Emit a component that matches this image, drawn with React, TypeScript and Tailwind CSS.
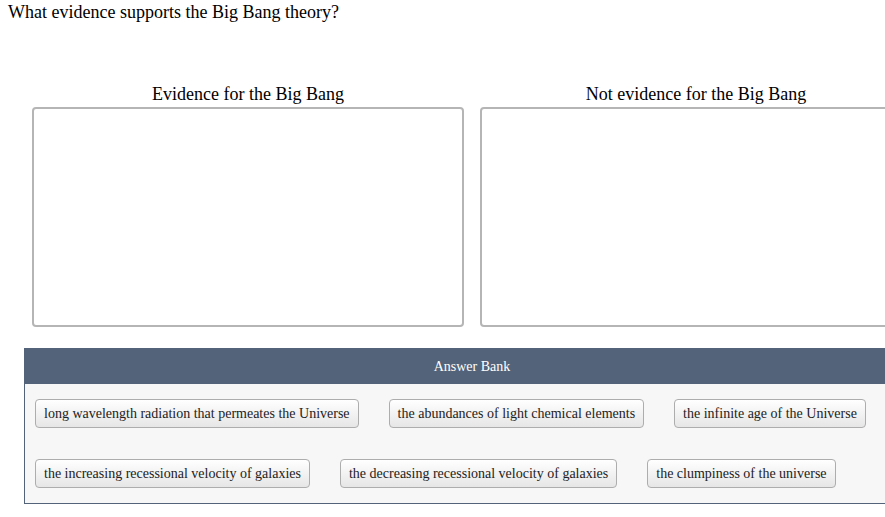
import React from "react";

const row1 = [
  "long wavelength radiation that permeates the Universe",
  "the abundances of light chemical elements",
  "the infinite age of the Universe",
];
const row2 = [
  "the increasing recessional velocity of galaxies",
  "the decreasing recessional velocity of galaxies",
  "the clumpiness of the universe",
];

function Chip({ text }: { text: string }) {
  return (
    <div className="h-[29px] px-[8px] flex items-center border border-[#adadad] rounded-[4px] bg-gradient-to-b from-white to-[#e6e6e6] text-[14px] text-[#222] whitespace-nowrap">
      {text}
    </div>
  );
}

export default function App() {
  return (
    <div
      className="w-[885px] h-[517px] overflow-hidden bg-white text-black"
      style={{ fontFamily: '"Liberation Serif", "Times New Roman", serif' }}
    >
      <div className="pt-[2px] pl-[8px] text-[18px] leading-[21px]">
        What evidence supports the Big Bang theory?
      </div>
      <div className="ml-[24px] w-[896px] mt-[61px]">
        <div className="flex gap-[16px] px-[8px]">
          {["Evidence for the Big Bang", "Not evidence for the Big Bang"].map((h) => (
            <div key={h} className="w-[432px] shrink-0">
              <div className="text-center text-[18px] leading-[21px] mb-[2px]">{h}</div>
              <div className="h-[220px] border-2 border-[#b5b5b5] rounded-[4px] bg-white" />
            </div>
          ))}
        </div>
        <div className="mt-[21px] border border-[#536379]">
          <div className="h-[35px] bg-[#536379] text-white text-[14px] flex items-center justify-center">
            Answer Bank
          </div>
          <div className="bg-[#f7f7f7] pt-[15px] pb-[15px] pl-[10px] flex flex-col gap-[31px]">
            <div className="flex gap-[30px]">
              {row1.map((t) => (
                <Chip key={t} text={t} />
              ))}
            </div>
            <div className="flex gap-[30px]">
              {row2.map((t) => (
                <Chip key={t} text={t} />
              ))}
            </div>
          </div>
        </div>
      </div>
    </div>
  );
}
